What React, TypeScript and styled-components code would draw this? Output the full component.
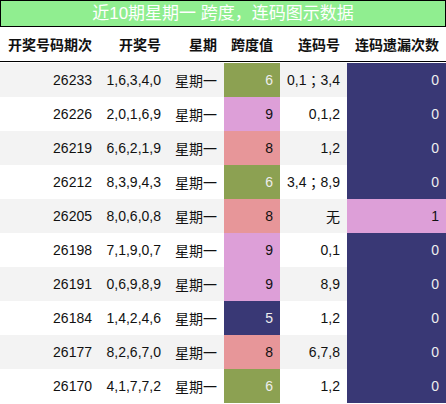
import styled, { createGlobalStyle } from "styled-components";

const GlobalStyle = createGlobalStyle`
  body {
    margin: 0;
    background: #fff;
    font-family: "Liberation Sans", "Noto Sans CJK SC", sans-serif;
  }
`;

const Wrapper = styled.div`
  width: 446px;
`;

const Title = styled.div`
  height: 25px;
  border: 1px solid #000;
  background: #90ee90;
  color: #fff;
  font-size: 17px;
  line-height: 25px;
  text-align: center;
`;

const Grid = styled.div`
  display: grid;
  grid-template-columns: 99px 69px 56px 56px 67px 99px;
`;

const HeaderRow = styled(Grid)`
  height: 34px;
  border-bottom: 1px solid #000;
  margin-bottom: 1px;
`;

const HeadCell = styled.div`
  display: flex;
  align-items: center;
  justify-content: flex-end;
  padding-right: 7px;
  font-weight: bold;
  font-size: 14px;
  color: #111;
`;

const Row = styled(Grid)<{ $alt: boolean }>`
  height: 34px;
  background: ${({ $alt }) => ($alt ? "#f3f3f3" : "#fff")};
`;

const Cell = styled.div<{ $bg?: string; $light?: boolean }>`
  display: flex;
  align-items: center;
  justify-content: flex-end;
  padding-right: 7px;
  font-size: 14px;
  background: ${({ $bg }) => $bg ?? "transparent"};
  color: ${({ $light }) => ($light ? "#eee" : "#111")};
`;

const Sep = styled.span`
  font-family: "Noto Sans CJK TC", sans-serif;
`;

const palette: Record<string, { bg: string; light: boolean }> = {
  olive: { bg: "#8ca152", light: true },
  plum: { bg: "#dd9fd8", light: false },
  salmon: { bg: "#e79699", light: false },
  navy: { bg: "#393875", light: true },
};

function spanColor(v: number) {
  if (v === 6) return palette.olive;
  if (v === 9) return palette.plum;
  if (v === 8) return palette.salmon;
  return palette.navy;
}

const rows = [
  { id: "26233", nums: "1,6,3,4,0", span: 6, lian: ["0,1", "3,4"], miss: 0 },
  { id: "26226", nums: "2,0,1,6,9", span: 9, lian: ["0,1,2"], miss: 0 },
  { id: "26219", nums: "6,6,2,1,9", span: 8, lian: ["1,2"], miss: 0 },
  { id: "26212", nums: "8,3,9,4,3", span: 6, lian: ["3,4", "8,9"], miss: 0 },
  { id: "26205", nums: "8,0,6,0,8", span: 8, lian: ["无"], miss: 1 },
  { id: "26198", nums: "7,1,9,0,7", span: 9, lian: ["0,1"], miss: 0 },
  { id: "26191", nums: "0,6,9,8,9", span: 9, lian: ["8,9"], miss: 0 },
  { id: "26184", nums: "1,4,2,4,6", span: 5, lian: ["1,2"], miss: 0 },
  { id: "26177", nums: "8,2,6,7,0", span: 8, lian: ["6,7,8"], miss: 0 },
  { id: "26170", nums: "4,1,7,7,2", span: 6, lian: ["1,2"], miss: 0 },
];

export default function App() {
  return (
    <>
      <GlobalStyle />
      <Wrapper>
        <Title>近10期星期一 跨度，连码图示数据</Title>
        <HeaderRow>
          <HeadCell>开奖号码期次</HeadCell>
          <HeadCell>开奖号</HeadCell>
          <HeadCell>星期</HeadCell>
          <HeadCell>跨度值</HeadCell>
          <HeadCell>连码号</HeadCell>
          <HeadCell>连码遗漏次数</HeadCell>
        </HeaderRow>
        {rows.map((r, i) => {
          const sc = spanColor(r.span);
          const mc = r.miss > 0 ? palette.plum : palette.navy;
          return (
            <Row key={r.id} $alt={i % 2 === 0}>
              <Cell>{r.id}</Cell>
              <Cell>{r.nums}</Cell>
              <Cell>星期一</Cell>
              <Cell $bg={sc.bg} $light={sc.light}>{r.span}</Cell>
              <Cell>
                {r.lian[0]}
                {r.lian[1] && (
                  <>
                    <Sep>；</Sep>
                    {r.lian[1]}
                  </>
                )}
              </Cell>
              <Cell $bg={mc.bg} $light={mc.light}>{r.miss}</Cell>
            </Row>
          );
        })}
      </Wrapper>
    </>
  );
}
